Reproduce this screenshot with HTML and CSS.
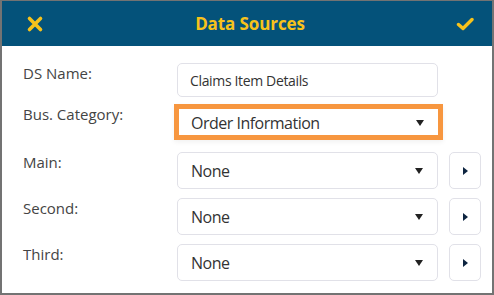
FILE: index.html
```html
<!DOCTYPE html>
<html lang="en">
<head>
    <meta charset="UTF-8">
    <title>Data Sources</title>
    <link rel="stylesheet" href="styles.css">
</head>
<body>
    <div class="panel">
        <div class="panel-header">
            <svg class="icon" width="18" height="18" viewBox="0 0 18 18">
                <path d="M3.5 3.5 L14.5 14.5 M14.5 3.5 L3.5 14.5" stroke="#f7c21b" stroke-width="3.6" stroke-linecap="round" fill="none"/>
            </svg>
            <h1>Data Sources</h1>
            <svg class="icon" width="18" height="18" viewBox="0 0 18 18">
                <path d="M2.5 9.5 L7 13.5 L16 4.5" stroke="#f7c21b" stroke-width="3.4" stroke-linecap="round" stroke-linejoin="round" fill="none"/>
            </svg>
        </div>
        <form class="panel-body">
            <div class="row">
                <label>DS Name:</label>
                <input class="field" type="text" value="Claims Item Details">
            </div>
            <div class="row">
                <label>Bus. Category:</label>
                <div class="select highlight"><span>Order Information</span><i class="caret"></i></div>
            </div>
            <div class="row">
                <label>Main:</label>
                <div class="select"><span>None</span><i class="caret"></i></div>
                <div class="go"><i class="arrow"></i></div>
            </div>
            <div class="row">
                <label>Second:</label>
                <div class="select"><span>None</span><i class="caret"></i></div>
                <div class="go"><i class="arrow"></i></div>
            </div>
            <div class="row">
                <label>Third:</label>
                <div class="select"><span>None</span><i class="caret"></i></div>
                <div class="go"><i class="arrow"></i></div>
            </div>
        </form>
    </div>
</body>
</html>
```

FILE: styles.css
```css
body {
    margin: 0;
    font-family: "Open Sans", "Noto Sans", sans-serif;
    color: #333;
}

.panel {
    width: 494px;
    height: 295px;
    box-sizing: border-box;
    border: 2px solid #737373;
    border-top-width: 1px;
    background: #fff;
}

.panel-header {
    height: 45px;
    background: #04527a;
    display: flex;
    align-items: center;
    justify-content: space-between;
    padding: 0 18px 0 24px;
}

.panel-header h1 {
    margin: 0;
    font-size: 17px;
    font-weight: bold;
    color: #f7c21b;
    letter-spacing: -0.1px;
}

.icon { display: block; }

.panel-body {
    padding: 17px 0 0 21px;
}

.row {
    display: flex;
    align-items: flex-start;
    margin-bottom: 9px;
}

.row:nth-child(1) { margin-bottom: 7px; }
.row:nth-child(2) { margin-bottom: 12px; }

.row label {
    width: 154px;
    font-size: 15px;
    line-height: 20px;
    color: #444;
}

.field, .select {
    width: 261px;
    box-sizing: border-box;
    border: 1px solid #e1e1e8;
    border-radius: 5px;
    background: #fff;
    font-family: inherit;
    color: #333;
}

.field {
    height: 34px;
    padding: 0 12px;
    font-size: 14px;
    letter-spacing: -0.35px;
    outline: none;
}

.select {
    height: 37px;
    display: flex;
    align-items: center;
    justify-content: space-between;
    padding: 0 14px 0 13px;
    font-size: 16px;
    letter-spacing: -0.5px;
}

.select.highlight {
    width: 269px;
    height: 36px;
    margin-left: -3px;
    border: 5px solid #f7963f;
    border-radius: 0;
    padding: 2px 14px 0 12px;
    box-shadow: 0 2px 5px rgba(0, 0, 0, 0.06);
}

.caret {
    width: 0;
    height: 0;
    border-left: 4px solid transparent;
    border-right: 4px solid transparent;
    border-top: 6px solid #222;
}

.go {
    width: 32px;
    height: 37px;
    box-sizing: border-box;
    margin-left: 11px;
    border: 1px solid #e1e1e8;
    border-radius: 5px;
    display: flex;
    align-items: center;
    justify-content: center;
}

.arrow {
    width: 0;
    height: 0;
    border-top: 4px solid transparent;
    border-bottom: 4px solid transparent;
    border-left: 5px solid #0d2440;
}
```
